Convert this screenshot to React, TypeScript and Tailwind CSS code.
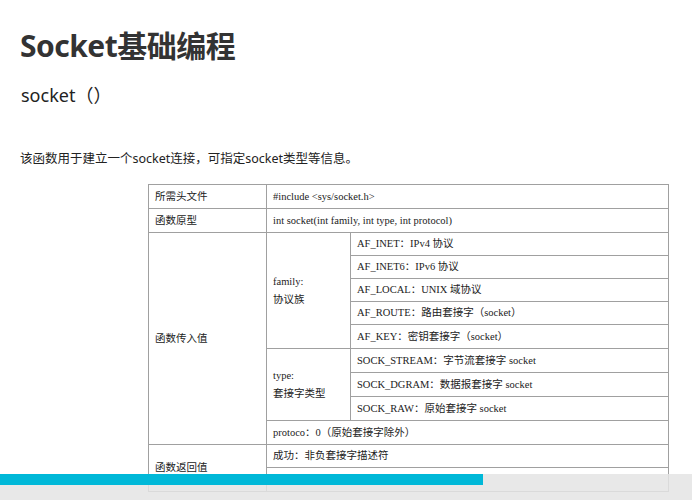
export default function App() {
  const serif = { fontFamily: '"Liberation Serif","Noto Sans CJK SC",serif' };
  const c = "border-r border-b border-[#a0a0a0] px-[6px] flex items-center text-[10.5px] text-[#222]";
  return (
    <div className="relative w-[692px] h-[500px] overflow-hidden bg-white" style={{ fontFamily: '"Noto Sans","Noto Sans CJK SC",sans-serif' }}>
      <div className="absolute left-[20px] top-[24px] text-[30px] font-bold text-[#333] tracking-[-0.5px] leading-[44px]">Socket基础编程</div>
      <div className="absolute left-[21px] top-[82px] text-[18px] text-[#222] leading-[26px]">socket（）</div>
      <div className="absolute left-[20px] top-[149px] text-[12.5px] text-[#222] leading-[20px]">该函数用于建立一个socket连接，可指定socket类型等信息。</div>
      <div className="absolute left-[148px] top-[184px] grid grid-cols-[118px_84px_318px] grid-rows-[24px_24px_23px_23px_23px_23px_24px_24px_24px_24px_24px_23px_24px] border-l border-t border-[#a0a0a0]" style={serif}>
        <div className={c}>所需头文件</div>
        <div className={`${c} col-span-2`}>#include &lt;sys/socket.h&gt;</div>
        <div className={c}>函数原型</div>
        <div className={`${c} col-span-2`}>int socket(int family, int type, int protocol)</div>
        <div className={`${c} row-span-9`}>函数传入值</div>
        <div className={`${c} row-span-5 flex-col !items-start justify-center leading-[18px]`}><span>family: </span><span>协议族</span></div>
        <div className={c}>AF_INET：IPv4 协议</div>
        <div className={c}>AF_INET6：IPv6 协议</div>
        <div className={c}>AF_LOCAL：UNIX 域协议</div>
        <div className={c}>AF_ROUTE：路由套接字（socket）</div>
        <div className={c}>AF_KEY：密钥套接字（socket）</div>
        <div className={`${c} row-span-3 flex-col !items-start justify-center leading-[18px]`}><span>type: </span><span>套接字类型</span></div>
        <div className={c}>SOCK_STREAM：字节流套接字 socket</div>
        <div className={c}>SOCK_DGRAM：数据报套接字 socket</div>
        <div className={c}>SOCK_RAW：原始套接字 socket</div>
        <div className={`${c} col-span-2`}>protoco：0（原始套接字除外）</div>
        <div className={`${c} row-span-2`}>函数返回值</div>
        <div className={`${c} col-span-2`}>成功：非负套接字描述符</div>
        <div className={`${c} col-span-2`}>失败：-1</div>
      </div>
      <div className="absolute left-0 top-[474px] w-[692px] h-[26px] bg-[#e4e4e4]/85"></div>
      <div className="absolute left-0 top-[474px] w-[483px] h-[11px] bg-[#00b8d8]"></div>
    </div>
  );
}
